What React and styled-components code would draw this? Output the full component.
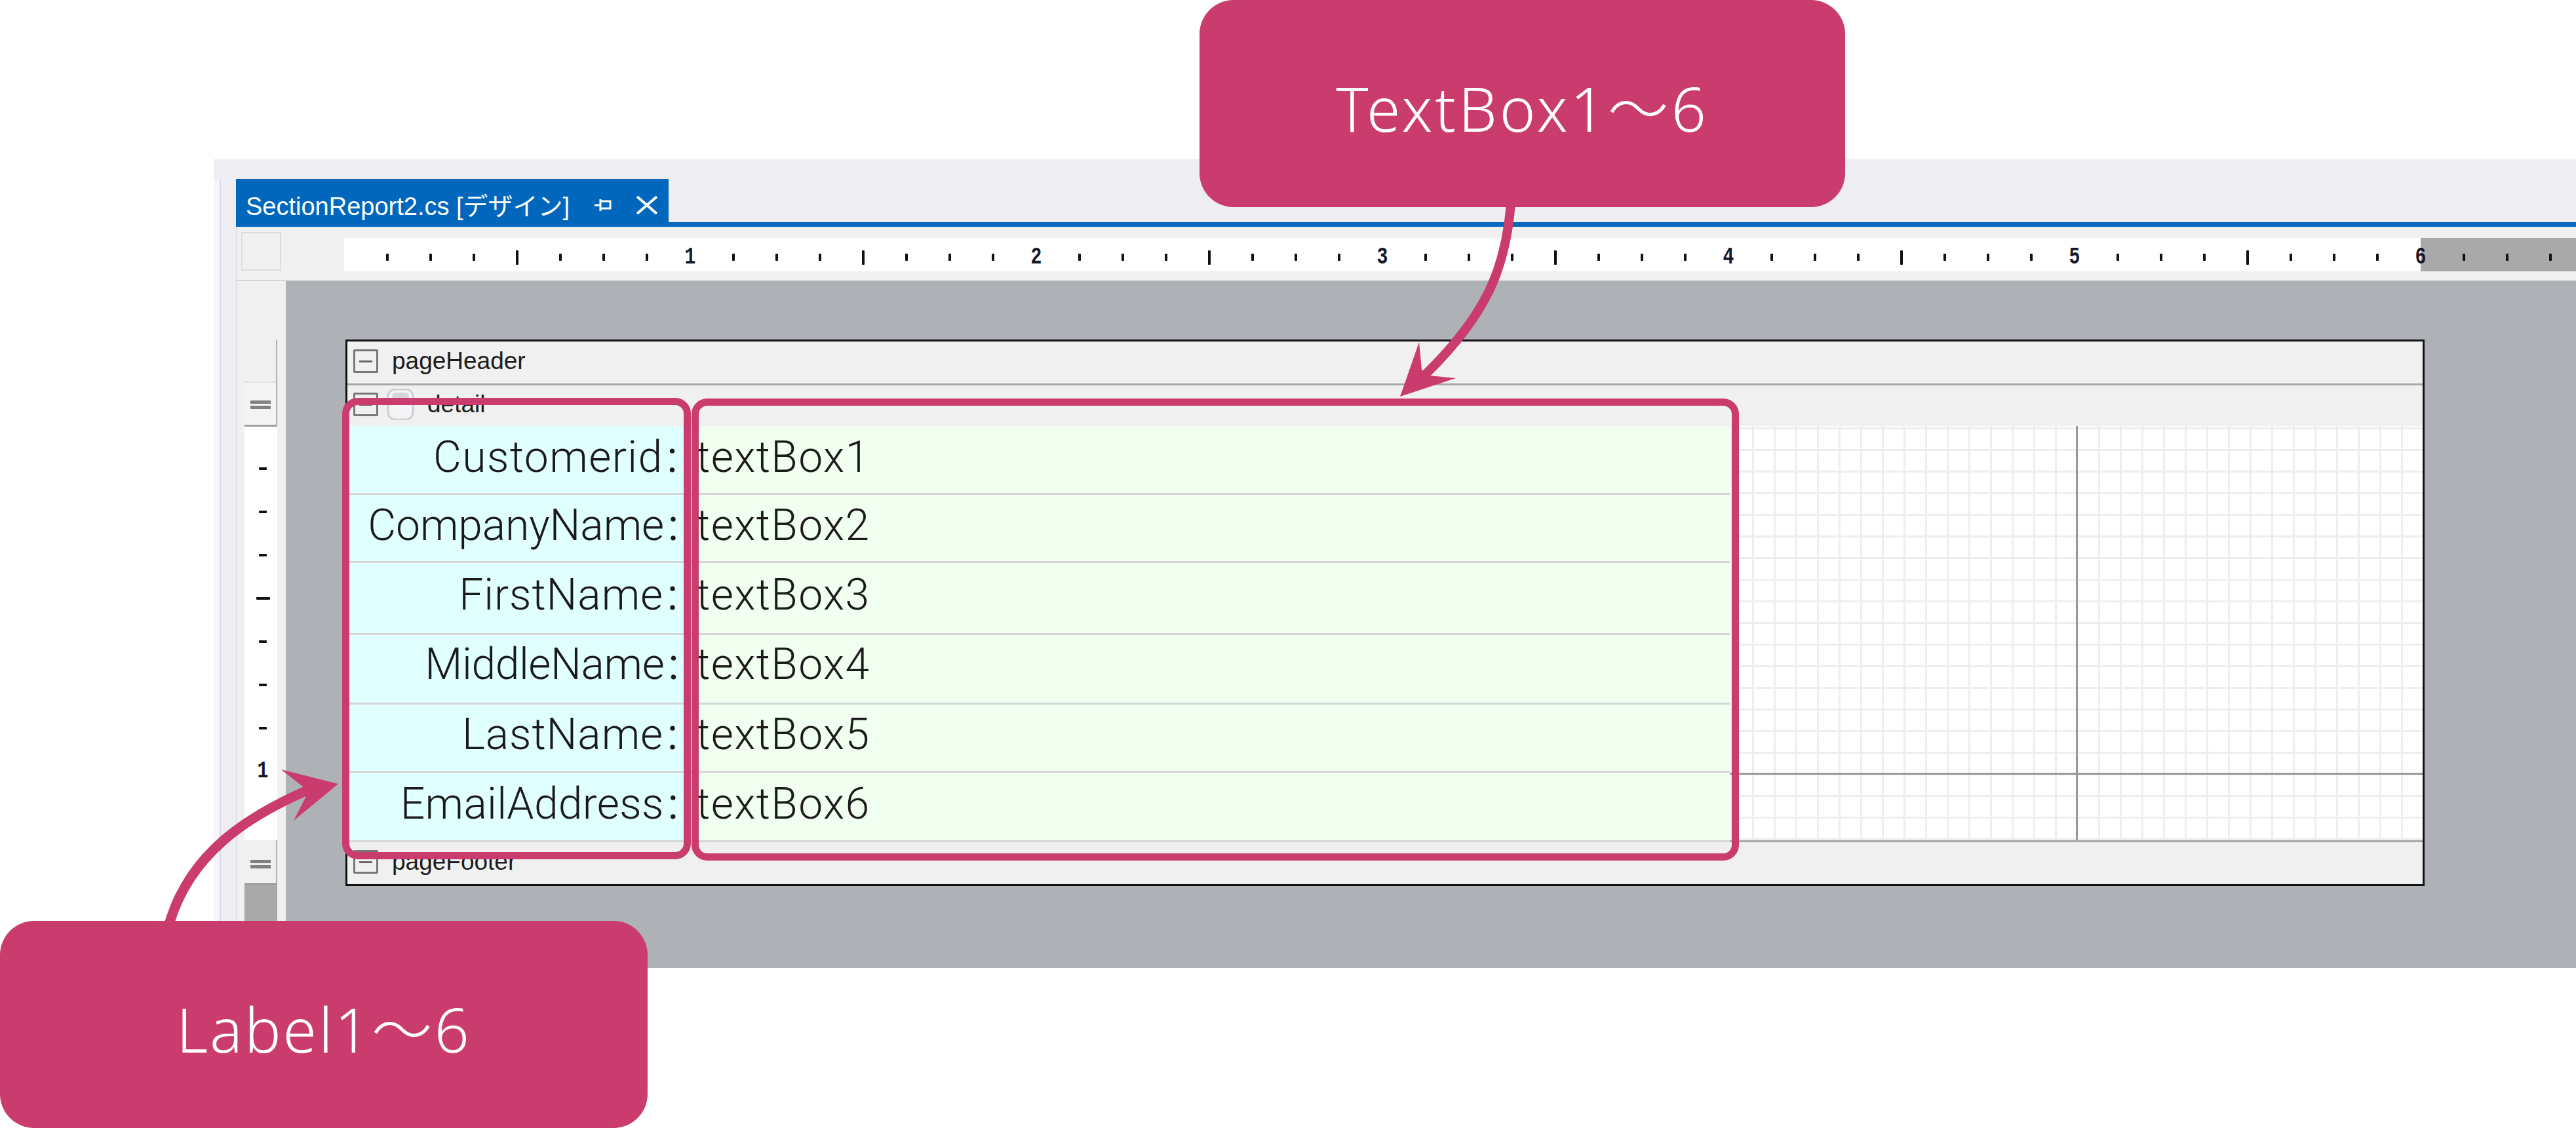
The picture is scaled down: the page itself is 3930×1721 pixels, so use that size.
import React from "react";
import styled, { createGlobalStyle } from "styled-components";

const ACCENT = "#ca3c6d";

const rows = [
  { label: "Customerid", value: "textBox1", h: 105, track: 1.4, pb: 8 },
  { label: "CompanyName", value: "textBox2", h: 104, track: -0.1, pb: 8 },
  { label: "FirstName", value: "textBox3", h: 110, track: 0.9, pb: 10 },
  { label: "MiddleName", value: "textBox4", h: 106, track: -0.4, pb: 14 },
  { label: "LastName", value: "textBox5", h: 104, track: 0.9, pb: 10 },
  { label: "EmailAddress", value: "textBox6", h: 106, track: 0.3, pb: 9 },
];

const hTicks = Array.from({ length: 51 }, (_, i) => i + 1);
const vTicks = Array.from({ length: 9 }, (_, i) => i + 1);

const GlobalStyle = createGlobalStyle`
  html, body {
    margin: 0;
    padding: 0;
    background: #fff;
  }
`;

const Page = styled.div`
  position: relative;
  width: 3930px;
  height: 1721px;
  overflow: hidden;
  background: #fff;
  padding: 243px 0 0 326px;
  box-sizing: border-box;
  font-family: "Liberation Sans", "Noto Sans CJK JP", sans-serif;
`;

const Window = styled.div`
  display: flex;
  height: 1234px;
  background: #eeeef2;
`;

const RailEdge = styled.div`
  width: 9px;
  margin: 32px 23px 0 0;
  background: #f6f6f9;
  border-right: 2px solid #d6d6e6;
`;

const Main = styled.div`
  flex: 1;
  min-width: 0;
  display: flex;
  flex-direction: column;
`;

const TabStrip = styled.div`
  height: 103px;
  box-sizing: border-box;
  padding-top: 30px;
  border-bottom: 7px solid #0067bd;
  display: flex;
`;

const Tab = styled.div`
  width: 660px;
  background: #0067bd;
  color: #fff;
  display: flex;
  align-items: center;
  padding-left: 15px;
  box-sizing: border-box;
  font-size: 38px;
  white-space: nowrap;
`;

const TabTitle = styled.span`
  flex: 0 0 532px;
  padding-top: 10px;
`;

const TabIcon = styled.svg`
  display: block;
  flex: none;
  margin-top: 14px;
  margin-right: ${(p) => p.$gap}px;
`;

const Designer = styled.div`
  flex: 1;
  display: flex;
  flex-direction: column;
  background: #f0f0f0;
  border-left: 1px solid #d6d6e6;
  min-height: 0;
`;

const TopBar = styled.div`
  height: 83px;
  box-sizing: border-box;
  padding: 8px 0 0 7px;
  display: flex;
  border-bottom: 2px solid #d4d4d4;
`;

const CornerBox = styled.div`
  width: 61px;
  height: 59px;
  box-sizing: border-box;
  border: 2px solid #dcdcdc;
  margin-right: 96px;
`;

const Ruler = styled.div`
  flex: 1;
  height: 51px;
  margin-top: 9px;
  padding-left: 33px;
  display: flex;
  overflow: hidden;
  background: linear-gradient(90deg, #fff 3168px, #a9a9a9 3168px);
`;

const TickSlot = styled.div`
  flex: 0 0 66px;
  display: flex;
  align-items: center;
  justify-content: center;
  padding-top: 8px;
  box-sizing: border-box;
`;

const VTickSlot = styled.div`
  flex: 0 0 66px;
  display: flex;
  align-items: center;
  justify-content: center;
`;

const Tick = styled.div`
  width: 4px;
  height: ${(p) => (p.$big ? 22 : 11)}px;
  background: #111;
  border-radius: 1px;
`;

const VTick = styled.div`
  height: 4px;
  width: ${(p) => (p.$big ? 21 : 12)}px;
  background: #111;
  border-radius: 1px;
`;

const RulerNum = styled.span`
  font-family: "Liberation Mono", monospace;
  font-size: 36px;
  line-height: 1;
  font-weight: 700;
  color: #16162a;
  transform: scaleX(0.78);
`;

const Work = styled.div`
  flex: 1;
  min-height: 0;
  display: flex;
`;

const VRuler = styled.div`
  width: 50px;
  margin: 0 13px 0 12px;
  display: flex;
  flex-direction: column;
  padding-top: 89px;
`;

const Splitter = styled.div`
  height: ${(p) => p.$h}px;
  box-sizing: border-box;
  background: ${(p) =>
    p.$seam
      ? "linear-gradient(#f0f0f0 64px, #e2e2e2 64px, #e2e2e2 66px, #f4f4f4 66px)"
      : "#f0f0f0"};
  border-right: 2px solid #b0b0b0;
  border-bottom: 3px solid #a0a0a0;
  display: flex;
  flex-direction: column;
  justify-content: flex-end;
  align-items: center;
  gap: 3px;
  padding-bottom: ${(p) => p.$pad}px;
`;

const GripLine = styled.div`
  width: 31px;
  height: 5px;
  background: #808080;
`;

const VTrack = styled.div`
  height: 631px;
  box-sizing: border-box;
  background: #fff;
  padding: 31px 0 0 6px;
  display: flex;
  flex-direction: column;
`;

const Thumb = styled.div`
  flex: 1;
  background: #a9a9a9;
`;

const Canvas = styled.div`
  flex: 1;
  min-width: 0;
  background: #aeb1b5;
  padding: 89px 0 0 91px;
`;

const Report = styled.div`
  width: 3172px;
  height: 834px;
  box-sizing: border-box;
  border: 3px solid #111;
  background: #f0f0f0;
  color: #1c1c1c;
  display: flex;
  flex-direction: column;
`;

const Band = styled.div`
  height: ${(p) => p.$h}px;
  box-sizing: border-box;
  display: flex;
  align-items: center;
  padding: 0 0 4px 9px;
  font-size: 37px;
  border-bottom: ${(p) => (p.$line ? "3px solid #a8a8a8" : "none")};
`;

const Collapse = styled.div`
  width: 38px;
  height: 36px;
  box-sizing: border-box;
  border: 3px solid #777;
  border-radius: 2px;
  margin-right: ${(p) => p.$gap}px;
  display: flex;
  align-items: center;
  justify-content: center;

  &::after {
    content: "";
    width: 20px;
    height: 3px;
    background: #666;
  }
`;

const BandIcon = styled.svg`
  display: block;
  margin-right: 20px;
`;

const BandBody = styled.div`
  height: 635px;
  display: flex;
`;

const RowList = styled.div`
  width: 2109px;
  display: flex;
  flex-direction: column;
`;

const Row = styled.div`
  height: ${(p) => p.$h}px;
  box-sizing: border-box;
  display: grid;
  grid-template-columns: 525px 1584px;
  border-bottom: 3px solid #d4d6d6;
`;

const Cell = styled.div`
  display: flex;
  align-items: center;
  padding-bottom: ${(p) => p.$pb}px;
  box-sizing: border-box;
  font-family: "Roboto", "Liberation Sans", sans-serif;
  font-weight: 300;
  font-size: 66px;
  letter-spacing: 1.4px;
  color: #1a1a1a;
  white-space: nowrap;
`;

const LabelCell = styled(Cell)`
  justify-content: flex-end;
  padding-right: 18px;
  background: #e0ffff;
  border-right: 2px solid #fff;
  letter-spacing: ${(p) => p.$track}px;
`;

const Colon = styled.span`
  margin-left: 6px;
  font-weight: 400;
`;

const ValueCell = styled(Cell)`
  padding-left: 7px;
  background: #f0fff0;
`;

const GridArea = styled.div`
  flex: 1;
  background-color: #fff;
  background-repeat: no-repeat, no-repeat, repeat, repeat;
  background-image:
    linear-gradient(#999, #999),
    linear-gradient(#999, #999),
    linear-gradient(90deg, #eee 3px, transparent 3px),
    linear-gradient(#eee 3px, transparent 3px);
  background-size: 3px 100%, 100% 3px, 33px 33px, 33px 33px;
  background-position: 528px 0, 0 529px, 1px 0, 0 2px;
  border-bottom: 3px solid #a8a8a8;
`;

const Highlight = styled.div`
  position: absolute;
  left: ${(p) => p.$x}px;
  top: ${(p) => p.$y}px;
  width: ${(p) => p.$w}px;
  height: ${(p) => p.$h}px;
  box-sizing: border-box;
  border: 11px solid ${ACCENT};
  border-radius: 24px;
`;

const ArrowLayer = styled.svg`
  position: absolute;
  left: 0;
  top: 0;
`;

const Callout = styled.div`
  position: absolute;
  left: ${(p) => p.$x}px;
  top: ${(p) => p.$y}px;
  width: ${(p) => p.$w}px;
  height: 316px;
  border-radius: 52px;
  background: ${ACCENT};
  color: #fff;
  display: flex;
  align-items: center;
  justify-content: center;
  padding-top: 4px;
  box-sizing: border-box;
  font-family: "Noto Sans", "Noto Sans CJK JP", sans-serif;
  font-weight: 300;
  font-size: 93px;
  letter-spacing: ${(p) => p.$track}px;
`;

export default function App() {
  return (
    <Page>
      <GlobalStyle />
      <Window>
        <RailEdge />
        <Main>
          <TabStrip>
            <Tab>
              <TabTitle>SectionReport2.cs [デザイン]</TabTitle>
              <TabIcon $gap={35} width="28" height="24" viewBox="0 0 28 24" fill="none" stroke="#fff" strokeWidth="3">
                <path d="M0 12h9M9 3v18M9 6h15v11H9" />
              </TabIcon>
              <TabIcon $gap={0} width="34" height="28" viewBox="0 0 34 28" fill="none" stroke="#fff" strokeWidth="4">
                <path d="M2 1l30 26M32 1L2 27" />
              </TabIcon>
            </Tab>
          </TabStrip>
          <Designer>
            <TopBar>
              <CornerBox />
              <Ruler>
                {hTicks.map((k) => (
                  <TickSlot key={k}>
                    {k % 8 === 0 ? <RulerNum>{k / 8}</RulerNum> : <Tick $big={k % 4 === 0} />}
                  </TickSlot>
                ))}
              </Ruler>
            </TopBar>
            <Work>
              <VRuler>
                <Splitter $h={133} $pad={24} $seam>
                  <GripLine />
                  <GripLine />
                </Splitter>
                <VTrack>
                  {vTicks.map((k) => (
                    <VTickSlot key={k}>
                      {k === 8 ? <RulerNum>1</RulerNum> : <VTick $big={k === 4} />}
                    </VTickSlot>
                  ))}
                </VTrack>
                <Splitter $h={68} $pad={22}>
                  <GripLine />
                  <GripLine />
                </Splitter>
                <Thumb />
              </VRuler>
              <Canvas>
                <Report>
                  <Band $h={67} $line>
                    <Collapse $gap={21} />
                    pageHeader
                  </Band>
                  <Band $h={62}>
                    <Collapse $gap={13} />
                    <BandIcon width="42" height="48" viewBox="0 0 42 48">
                      <rect x="2" y="1" width="38" height="46" rx="11" fill="#f4f4f6" stroke="#cfcfd4" strokeWidth="3" />
                      <rect x="8" y="6" width="26" height="14" rx="6" fill="#d4d4da" />
                    </BandIcon>
                    detail
                  </Band>
                  <BandBody>
                    <RowList>
                      {rows.map((r) => (
                        <Row key={r.value} $h={r.h}>
                          <LabelCell $track={r.track} $pb={r.pb}>
                            {r.label}
                            <Colon>:</Colon>
                          </LabelCell>
                          <ValueCell $pb={r.pb}>{r.value}</ValueCell>
                        </Row>
                      ))}
                    </RowList>
                    <GridArea />
                  </BandBody>
                  <Band $h={64}>
                    <Collapse $gap={21} />
                    pageFooter
                  </Band>
                </Report>
              </Canvas>
            </Work>
          </Designer>
        </Main>
      </Window>

      <Highlight $x={522} $y={607} $w={532} $h={704} />
      <Highlight $x={1055} $y={608} $w={1598} $h={705} />

      <ArrowLayer width="3930" height="1721" viewBox="0 0 3930 1721">
        <path d="M2305 310C2297 410 2268 480 2174 572" fill="none" stroke={ACCENT} strokeWidth="14" />
        <path d="M2136 605L2165 522L2169 564L2181 573L2221 577Z" fill={ACCENT} />
        <path d="M258 1410C290 1300 380 1245 466 1207" fill="none" stroke={ACCENT} strokeWidth="15" />
        <path d="M516 1196L429 1174L463 1201L467 1215L448 1252Z" fill={ACCENT} />
      </ArrowLayer>

      <Callout $x={1830} $y={0} $w={985} $track={4}>TextBox1～6</Callout>
      <Callout $x={0} $y={1405} $w={988} $track={3}>Label1～6</Callout>
    </Page>
  );
}
